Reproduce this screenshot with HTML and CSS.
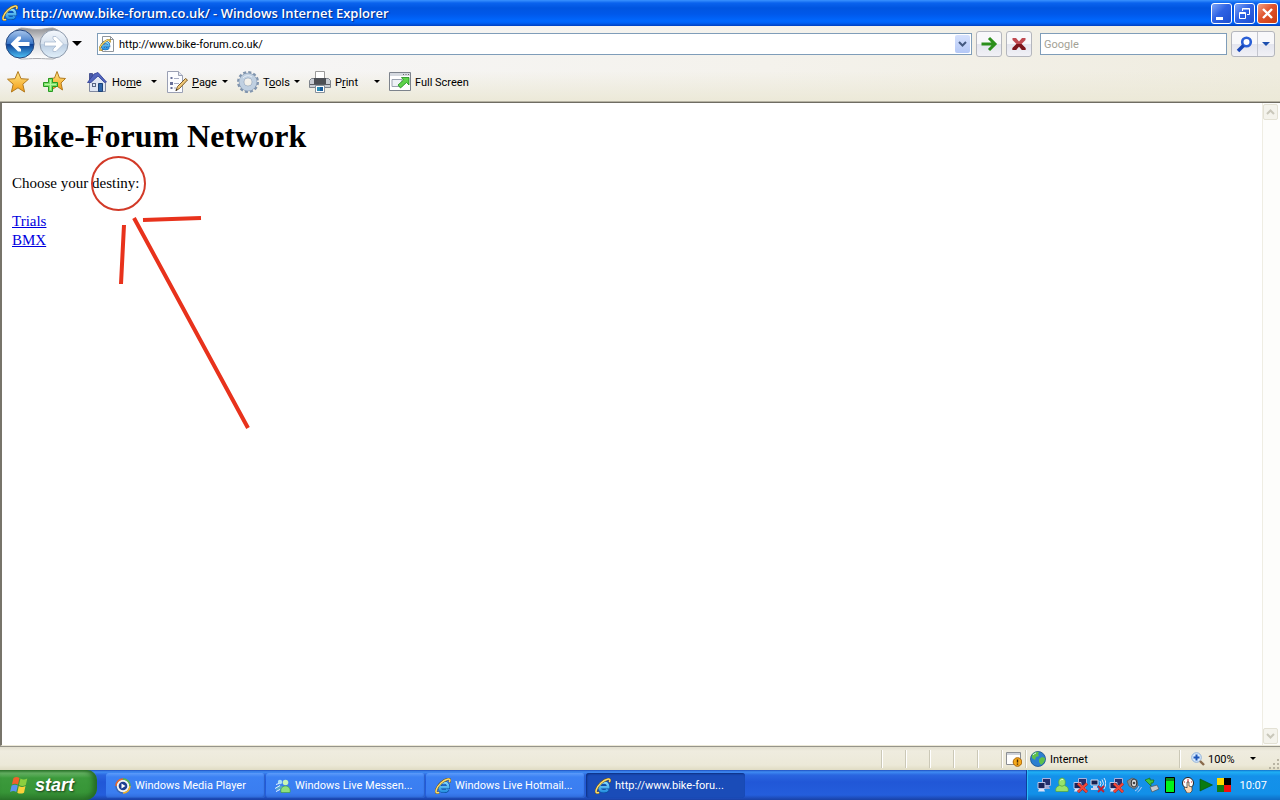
FILE: index.html
```html
<!DOCTYPE html>
<html lang="en">
<head>
  <meta charset="UTF-8">
  <title>http://www.bike-forum.co.uk/ - Windows Internet Explorer</title>
  <link rel="stylesheet" href="styles.css">
</head>
<body>
  <!-- shared icons -->
  <svg class="defs" width="0" height="0" aria-hidden="true">
    <defs>
      <linearGradient id="blueE" gradientUnits="userSpaceOnUse" x1="0" y1="3" x2="0" y2="15">
        <stop offset="0" stop-color="#8fe4ff"/><stop offset="1" stop-color="#1a86dd"/>
      </linearGradient>
      <linearGradient id="gold" x1="0" y1="0" x2="0" y2="1">
        <stop offset="0" stop-color="#ffe98a"/><stop offset="1" stop-color="#f39a12"/>
      </linearGradient>
      <linearGradient id="backBlue" x1="0" y1="0" x2="0" y2="1">
        <stop offset="0" stop-color="#a9c6ec"/><stop offset=".48" stop-color="#3c78c8"/><stop offset=".52" stop-color="#0c3f96"/><stop offset="1" stop-color="#4fc3f7"/>
      </linearGradient>
      <linearGradient id="fwdBlue" x1="0" y1="0" x2="0" y2="1">
        <stop offset="0" stop-color="#f4f8fd"/><stop offset=".5" stop-color="#d6e1ee"/><stop offset=".52" stop-color="#bccee3"/><stop offset="1" stop-color="#e2f0fa"/>
      </linearGradient>
      <linearGradient id="shell" x1="0" y1="0" x2="0" y2="1">
        <stop offset="0" stop-color="#8f8f92"/><stop offset=".35" stop-color="#cfd0d4"/><stop offset="1" stop-color="#ffffff"/>
      </linearGradient>
      <symbol id="ie" viewBox="0 0 16 16">
        <path d="M4.500 9.200h8.700c0-3-1.700-4.700-4.300-4.700-2.700 0-4.500 1.800-4.500 4.500 0 2.600 1.800 4.300 4.500 4.300 1.800 0 3.100-.7 3.800-2" fill="none" stroke="#0a4c9c" stroke-width="3.600"/>
        <path d="M4.500 9.200h8.700c0-3-1.700-4.700-4.300-4.700-2.700 0-4.500 1.800-4.500 4.500 0 2.600 1.800 4.300 4.500 4.300 1.800 0 3.100-.7 3.800-2" fill="none" stroke="url(#blueE)" stroke-width="2.500"/>
        <path d="M14.300 4.200C15.700 1.800 14.800 .8 12.500 1.200 8.500 2 3 7 1.400 11.400c-1 2.800 0 4.200 2.700 3" fill="none" stroke="#735510" stroke-width="2.500"/>
        <path d="M14.300 4.200C15.700 1.800 14.800 .8 12.500 1.200 8.500 2 3 7 1.400 11.400c-1 2.800 0 4.200 2.700 3" fill="none" stroke="#fbdc72" stroke-width="1.500"/>
      </symbol>
      <symbol id="pcs" viewBox="0 0 16 16">
        <path d="M6.500 1.500h8v7h-8z" fill="#24306e" stroke="#aab2dc"/>
        <path d="M8 9h5l1 3H8z" fill="#9ea7d2"/>
        <path d="M2 5.500h7v6H2z" fill="#1a2358" stroke="#bcc4e6"/>
        <path d="M3 12h5l1 2.500H2z" fill="#dde2f7"/>
      </symbol>
      <symbol id="redx" viewBox="0 0 16 16">
        <path d="M6 6.500l9 8.500M15 6.500L6 15" stroke="#a51c1c" stroke-width="3"/>
        <path d="M6 6.500l9 8.500M15 6.500L6 15" stroke="#f24a3c" stroke-width="1.800"/>
      </symbol>
    </defs>
  </svg>

  <header class="titlebar">
    <svg class="icon-16" aria-hidden="true"><use href="#ie"/></svg>
    <span class="title">http://www.bike-forum.co.uk/ - Windows Internet Explorer</span>
    <button class="win-btn" aria-label="Minimize">
      <svg width="19" height="19"><path d="M4 13h7v3H4z" fill="#fff"/></svg>
    </button>
    <button class="win-btn" aria-label="Restore">
      <svg width="19" height="19" fill="none" stroke="#fff"><path d="M7.500 7V4.500h7v6H12M7 5h8"/><path d="M4.500 8.500h6v6h-6zM4 9.500h7"/></svg>
    </button>
    <button class="win-btn close" aria-label="Close">
      <svg width="19" height="19"><path d="M5 5l9 9M14 5l-9 9" stroke="#fff" stroke-width="2.400"/></svg>
    </button>
  </header>

  <div class="toolbars">
    <div class="navbar">
      <div class="travel">
        <svg class="travel-shell" width="66" height="34" aria-hidden="true">
          <path d="M17 1C23 1 26 2.500 33 2.500S43 1 49 1a16 16 0 0 1 0 31C43 32 40 31.500 33 31.500S23 32 17 32A16 16 0 0 1 17 1z" fill="url(#shell)" stroke="#a9aaae"/>
        </svg>
        <button class="travel-btn" aria-label="Back">
          <svg width="30" height="30"><circle cx="15" cy="15" r="14" fill="url(#backBlue)" stroke="#25467e"/><path d="M5.500 15l7.500-7.500h3V10l-3 3h11.500v4H13l3 3v2.500h-3z" fill="#fff"/></svg>
        </button>
        <button class="travel-btn" aria-label="Forward">
          <svg width="30" height="30"><circle cx="15" cy="15" r="14" fill="url(#fwdBlue)" stroke="#8e9aab"/><path d="M24.500 15L17 7.500h-3V10l3 3H5.500v4H17l-3 3v2.500h3z" fill="#fff" stroke="#a3b4cc" stroke-width=".7"/></svg>
        </button>
      </div>
      <button class="plain recent" aria-label="Recent pages">
        <svg width="10" height="6"><path d="M0 0h10L5 5z"/></svg>
      </button>
      <div class="address">
        <svg class="icon-16" viewBox="0 0 16 16" aria-hidden="true">
          <path d="M3.500.500h8l3 3v12h-11z" fill="#fff" stroke="#8f959c"/><path d="M11.500.500v3h3" fill="none" stroke="#8f959c"/>
          <use href="#ie" x="0" y="3" width="12" height="12"/>
        </svg>
        <input class="field" type="text" value="http://www.bike-forum.co.uk/" aria-label="Address">
        <button class="combo" aria-label="Show address list">
          <svg width="9" height="6"><path d="M1 1l3.500 3.500L8 1" fill="none" stroke="#43597f" stroke-width="2"/></svg>
        </button>
      </div>
      <button class="tool" aria-label="Go">
        <svg width="18" height="16"><path d="M1.500 8h13M9 2l6 6-6 6" fill="none" stroke="#2c8f1c" stroke-width="3"/></svg>
      </button>
      <button class="tool" aria-label="Stop">
        <svg width="16" height="16"><path d="M1.500 2h3.500l3 3.500L11 2h3.500v2l-4 4 4 4v2H11l-3-3.500L5 14H1.500v-2l4-4-4-4z" fill="#c04a50"/><path d="M5.500 8h5l4 4v2H11l-3-3.500L5 14H1.500v-2z" fill="#7b161c"/></svg>
      </button>
      <div class="search">
        <input class="field" type="text" placeholder="Google" aria-label="Search">
      </div>
      <div class="search-split">
        <button class="split-main" aria-label="Search">
          <svg width="17" height="17"><circle cx="10.500" cy="6" r="4.300" fill="#fff" stroke="#2a5fd6" stroke-width="2.600"/><path d="M7.500 9.500L2 15" stroke="#1746b8" stroke-width="3.600"/></svg>
        </button>
        <button class="split-drop" aria-label="Search options">
          <svg width="8" height="5"><path d="M0 0h8L4 4z" fill="#1c4fae"/></svg>
        </button>
      </div>
    </div>

    <div class="commandbar">
      <button class="plain fav" aria-label="Favorites Center">
        <svg width="24" height="24"><path d="M12 1.500l3 7.200 7.500.5-5.700 5 1.800 7.800-6.600-4.200L5.400 22l1.800-7.800-5.700-5 7.500-.5z" fill="url(#gold)" stroke="#b27a1e" stroke-linejoin="round"/></svg>
      </button>
      <button class="plain fav" aria-label="Add to Favorites">
        <svg width="24" height="24"><path d="M15 1.500l2.500 6.500 6 .5-4.500 4.500 1.500 7-5.500-3.800L9.500 20 11 13 6.500 8.500l6-.5z" fill="url(#gold)" stroke="#b27a1e" stroke-linejoin="round"/><path d="M6.500 8.500h4v4h5v4h-5v5h-4v-5h-5v-4h5z" fill="#7ee06a" stroke="#279a22"/><path d="M8.500 10v10M3 14.500h11" stroke="#b6f5a2"/></svg>
      </button>
      <div class="commands">
        <button class="command wide">
          <svg width="22" height="22"><path d="M3.500 2.500h3v7h-3z" fill="#4858a8" stroke="#273478" stroke-width=".7"/><path d="M3.500 11.500L12 4l7.500 7.500v9h-16z" fill="#dfe6f3" stroke="#8089a0"/><path d="M1.500 11.500L8 3l4-1.500 8.500 9.500-2 .5L12 5 5 11.500z" fill="#5265bd" stroke="#2d3e94" stroke-width=".8"/><path d="M6 12h4v4H6z" fill="#5a6785"/><path d="M7 13h2v2H7z" fill="#dde8f7"/><path d="M12.500 12.500h4v8h-4z" fill="#2f67ac" stroke="#1d4377"/></svg>
          <span>Ho<u>m</u>e</span>
          <svg class="drop" width="6" height="4"><path d="M0 0h6L3 3z"/></svg>
        </button>
        <button class="command">
          <svg width="22" height="22"><path d="M1.500.500h11l4 4v17h-15z" fill="#fbfcff" stroke="#9aa0b4"/><path d="M12.500.500v4h4" fill="#dfe4f0" stroke="#9aa0b4"/><path d="M4.500 6h2v2h-2zM4 11h3v3H4zM4.500 16h2v2h-2z" fill="#69709a"/><path d="M8 7.500h5M8 12.500h5M8 17h2" stroke="#a7adc3"/><path d="M10 19.500l1.500-4 8-8 2 1.500-8 8.500z" fill="#f0c877" stroke="#7b5b2a"/><path d="M9.500 20l.7-2 1.300 1z" fill="#222"/></svg>
          <span><u>P</u>age</span>
          <svg class="drop" width="6" height="4"><path d="M0 0h6L3 3z"/></svg>
        </button>
        <button class="command">
          <svg width="22" height="22"><circle cx="11" cy="11" r="9.500" fill="none" stroke="#8195ae" stroke-width="3" stroke-dasharray="2.970 2"/><circle cx="11" cy="11" r="6.500" fill="none" stroke="#8094ad" stroke-width="5.500"/><circle cx="11" cy="11" r="6.500" fill="none" stroke="#c0d0e1" stroke-width="4.400"/><path d="M6 7a6.500 6.500 0 0 1 9-1" fill="none" stroke="#e6eef6"/></svg>
          <span>T<u>o</u>ols</span>
          <svg class="drop" width="6" height="4"><path d="M0 0h6L3 3z"/></svg>
        </button>
        <button class="command wide">
          <svg width="22" height="22"><path d="M6.500.500h9v8h-9z" fill="#fff" stroke="#9b9b9b"/><path d="M.500 9.500l2-2h17l2 2v7H.500z" fill="#c8ccd3" stroke="#7f848c"/><path d="M5 7h12v6H5z" fill="#4c4f55"/><path d="M1 13.500h20" stroke="#5b5e64"/><path d="M6.500 14.500h9v7h-9z" fill="#fff" stroke="#87909a"/><path d="M8 16h3v4H8z" fill="#2a8db5"/><path d="M11 16h3v4h-3z" fill="#175c9c"/></svg>
          <span>P<u>r</u>int</span>
          <svg class="drop" width="6" height="4"><path d="M0 0h6L3 3z"/></svg>
        </button>
        <button class="command">
          <svg width="22" height="20"><path d="M.500.500h21v18H.500z" fill="#fff" stroke="#7d838c"/><path d="M1 1h20v3H1z" fill="#d5d9df"/><path d="M14 2.500h1M16.500 2.500h1M19 2.500h1" stroke="#666"/><path d="M3 7.500h10v7H3z" fill="#eef1f6" stroke="#9ba3b0"/><path d="M9 13l5.500-5-2-2.500H20V13l-2.500-2.500-6 5.500z" fill="#5ed34a" stroke="#1d8a1c" stroke-width=".8"/></svg>
          <span>Full Screen</span>
        </button>
      </div>
    </div>
  </div>

  <div class="viewport">
    <main class="page">
      <h1>Bike-Forum Network</h1>
      <p>Choose your destiny:</p>
      <p><a href="#">Trials</a><br><a href="#">BMX</a></p>
      <!-- hand-drawn marks over the page -->
      <svg class="marks" width="260" height="340" fill="none" stroke="#e8321c" aria-hidden="true">
        <circle cx="116.500" cy="80.500" r="26.500" stroke="#d23a28" stroke-width="2"/>
        <path d="M132 115L246 325M141 117l58-2M122 122l-3 59" stroke-width="4"/>
      </svg>
    </main>
    <div class="scrollbar">
      <button class="scroll-btn" aria-label="Scroll up"><svg width="9" height="6"><path d="M1 5l3.500-3.500L8 5" fill="none" stroke="#c9c7ba" stroke-width="2"/></svg></button>
      <button class="scroll-btn" aria-label="Scroll down"><svg width="9" height="6"><path d="M1 1l3.500 3.500L8 1" fill="none" stroke="#c9c7ba" stroke-width="2"/></svg></button>
    </div>
  </div>

  <div class="statusbar">
    <span class="pane"></span>
    <span class="pane"></span>
    <span class="pane"></span>
    <span class="pane"></span>
    <span class="pane"></span>
    <span class="pane">
      <svg width="16" height="16"><path d="M.500 1.500h14v12H.500z" fill="#fff" stroke="#8b8e93"/><path d="M1 2h13v2H1z" fill="#cfd3da"/><circle cx="11.500" cy="11" r="4.300" fill="#f5a91b" stroke="#a96506"/><path d="M11.500 8.500v3M11.500 12.500v1.200" stroke="#4b2a00" stroke-width="1.400"/></svg>
    </span>
    <span class="pane zone">
      <svg width="16" height="16"><circle cx="8" cy="8" r="7.500" fill="#2c7fd0" stroke="#184f8c" stroke-width=".8"/><path d="M2 4c2-3 5-3.500 7-3l-1 2 1 2-3 1-1 3-3-2zM9 8l3-2 3 1c0 3-1 5-4 7l-2-3z" fill="#5fc04a"/><path d="M3 4c1-1 2-1.800 3-2" stroke="#d6f3ff" fill="none"/></svg>
      <span>Internet</span>
    </span>
    <button class="pane zoom">
      <svg width="14" height="14"><circle cx="5.500" cy="5.500" r="4.800" fill="#d8eafd" stroke="#8fb0d8"/><path d="M5.500 2.500v6M2.500 5.500h6" stroke="#1c55b8" stroke-width="2"/><path d="M9 9l4 4" stroke="#8a6a4c" stroke-width="2.400"/></svg>
      <span>100%</span>
      <svg class="drop" width="6" height="4"><path d="M0 0h6L3 3z"/></svg>
    </button>
    <svg class="grip" width="12" height="12" fill="#b8b4a3"><path d="M9 1h2v2H9zM5 5h2v2H5zM9 5h2v2H9zM1 9h2v2H1zM5 9h2v2H5zM9 9h2v2H9z"/></svg>
  </div>

  <footer class="taskbar">
    <button class="start">
      <svg width="20" height="18" aria-hidden="true"><path d="M3.500 2c2-1.300 4-1.300 6 0L8 8.600C6 7.300 4 7.300 1.900 8.600z" fill="#f0602c"/><path d="M10.500 2.600c2 1.300 4.200 1.200 6.800 0l-1.500 6.500c-2.400 1.200-4.600 1.200-6.800 0z" fill="#8ccf3f"/><path d="M1.600 9.600c2.200-1.300 4.200-1.300 6.200 0L6.300 16c-2-1.300-4-1.300-6.200 0z" fill="#5b93f0"/><path d="M8.800 10.100c2 1.300 4.300 1.300 6.700 0L14 16.700c-2.400 1.200-4.600 1.200-6.700 0z" fill="#fbd13a"/></svg>
      <span>start</span>
    </button>
    <div class="tasks">
      <button class="task">
        <svg class="icon-16"><circle cx="8" cy="8" r="7" fill="#f3f3f3" stroke="#3869b8" stroke-width="1.500"/><path d="M8 1a7 7 0 0 1 7 7" fill="none" stroke="#5db947" stroke-width="1.600"/><path d="M1 8a7 7 0 0 1 7-7" fill="none" stroke="#ef6a28" stroke-width="1.600"/><path d="M15 8a7 7 0 0 1-7 7" fill="none" stroke="#f1b42d" stroke-width="1.600"/><circle cx="8" cy="8" r="4.300" fill="#1c3e91"/><path d="M6.500 5.500l4 2.500-4 2.500z" fill="#fff"/></svg>
        <span>Windows Media Player</span>
      </button>
      <button class="task">
        <svg class="icon-16"><circle cx="5" cy="4" r="2.200" fill="#aee0f5"/><path d="M1 12c0-6 8-6 8 0z" fill="#57a6cc"/><path d="M0 10.500l5-3M1 13.500l4-2M1 6.500l3-1" stroke="#e8f7ff"/><circle cx="10.500" cy="4.500" r="2.800" fill="#c8f5b4"/><path d="M6 14.500C5 10 8 8 10.500 8s5.500 2 4.500 6.500z" fill="#8fe07c" stroke="#3b9a3b" stroke-width=".6"/></svg>
        <span>Windows Live Messen...</span>
      </button>
      <button class="task">
        <svg class="icon-16"><use href="#ie"/></svg>
        <span>Windows Live Hotmail...</span>
      </button>
      <button class="task active">
        <svg class="icon-16"><use href="#ie"/></svg>
        <span>http://www.bike-foru...</span>
      </button>
    </div>
    <div class="tray">
      <svg class="icon-16"><use href="#pcs"/></svg>
      <svg class="icon-16"><path d="M2 14.500c-1-3.500 1-5 3.500-6C4 6 4.500 1 8 1s4 5 2.500 7.500c2.500 1 4.500 2.500 3.500 6z" fill="#97e36a" stroke="#56a53a" stroke-width=".7"/><path d="M6 8.500q2 1.500 4 0" fill="none" stroke="#56a53a" stroke-width=".8"/><path d="M6.500 3.500q1-1.500 2.500-1" fill="none" stroke="#e6ffd5"/></svg>
      <svg class="icon-16"><use href="#pcs"/><use href="#redx"/></svg>
      <svg class="icon-16"><path d="M1 3h7v5H1z" fill="#16204f" stroke="#d5dbf2"/><path d="M3 9h4v2h1v2H1v-2h2z" fill="#c8cfec"/><path d="M10 4q2 2 0 5M12 2.500q3 4 0 8M14 1q3.500 5 0 11" fill="none" stroke="#dfe9fb"/><path d="M8 9l6 6M14 9l-6 6" stroke="#c3202e" stroke-width="1.800"/></svg>
      <svg class="icon-16"><use href="#pcs"/><use href="#redx"/></svg>
      <svg class="icon-16"><path d="M1 4l5-3 5 2 1 6-4 3-5-3z" fill="#8b8d90" stroke="#55585c" stroke-width=".7"/><ellipse cx="8" cy="6" rx="2.800" ry="4" fill="#d9dadb" stroke="#333"/><circle cx="8" cy="6" r="1.300" fill="#444"/><path d="M9 14q3-1 4-5M11.500 15q3-2 4-5" fill="none" stroke="#b6cdf7"/></svg>
      <svg class="icon-16"><path d="M6 10l7-2 2 4-7 3z" fill="#c5c9ce" stroke="#4b4f55" stroke-width=".7"/><path d="M1 3l5-2v2h4l-1 3H7v3z" fill="#42c63c" stroke="#146b18" stroke-width=".7"/></svg>
      <svg class="icon-16"><path d="M3.500.500h9v15h-9z" fill="#00f51a" stroke="#000"/><path d="M4 1h8v3H4z" fill="#0a8a18"/></svg>
      <svg class="icon-16"><circle cx="8" cy="6" r="5.500" fill="#fff" stroke="#222"/><path d="M8 6V2M4 5h1M11 5h1" stroke="#d02020"/><path d="M7 5h2v4l3 1v4l-2 2H7l-3-5 2-1 1 1z" fill="#ffd7b0" stroke="#333" stroke-width=".7"/></svg>
      <svg class="icon-16"><path d="M2 2l12.500 6L2 14z" fill="#0a7a10" stroke="#064d0a" stroke-width=".6"/></svg>
      <svg class="icon-16"><path d="M1 1h7v7H1z" fill="#ffd900"/><path d="M8 1h7v7H8z" fill="#000"/><path d="M1 8h7v7H1z" fill="#117d12"/><path d="M8 8h7v7H8z" fill="#f30d0d"/></svg>
      <time class="clock">10:07</time>
    </div>
  </footer>
</body>
</html>
```

FILE: styles.css
```css
* {
  box-sizing: border-box;
}
body {
  margin: 0;
  height: 100vh;
  display: flex;
  flex-direction: column;
  overflow: hidden;
  font-family: Roboto, "Noto Sans", sans-serif;
  font-size: 11px;
  color: #000;
}
button {
  margin: 0;
  padding: 0;
  border: 0;
  background: none;
  font: inherit;
  color: inherit;
  display: flex;
  align-items: center;
}
svg {
  flex: none;
  display: block;
}
.defs {
  position: absolute;
}
.icon-16 {
  width: 16px;
  height: 16px;
}

/* title bar */
.titlebar {
  height: 26px;
  flex: none;
  display: flex;
  align-items: center;
  gap: 2px;
  padding: 0 2px;
  background: linear-gradient(#3a93ff 0, #0a63ee 3px, #0055e0 8px, #0058ea 14px, #0068ff 21px, #0061f5 23px, #0040c0 26px);
}
.title {
  flex: 1;
  padding-left: 2px;
  font-family: "Open Sans", sans-serif;
  font-size: 13px;
  font-weight: 600;
  color: #fff;
  text-shadow: 1px 1px 1px #0a2a80;
  white-space: nowrap;
}
.win-btn {
  width: 21px;
  height: 21px;
  border: 1px solid #fff;
  border-radius: 3px;
  background: linear-gradient(135deg, #7ea5f7, #2f63e4 45%, #1d4fd0);
}
.win-btn.close {
  background: linear-gradient(135deg, #f0a084, #e0532c 45%, #c93c12);
}

/* toolbars */
.toolbars {
  flex: none;
  background: linear-gradient(rgba(236, 233, 216, 0) 60%, #ece9d8), linear-gradient(90deg, #f7f7fa, #f4f2ec 60%, #efecdf);
  border-bottom: 1px solid #b5b2a3;
}
.navbar {
  height: 36px;
  display: flex;
  align-items: center;
  padding: 0 5px 0 4px;
}
.travel {
  position: relative;
  width: 66px;
  height: 34px;
  display: flex;
  align-items: center;
  justify-content: space-between;
  padding: 0 1px;
}
.travel-shell {
  position: absolute;
  left: 0;
  top: 0;
}
.travel-btn {
  position: relative;
}
.recent {
  padding: 0 15px 0 2px;
}
.address,
.search {
  height: 22px;
  display: flex;
  align-items: center;
  border: 1px solid #7f9db9;
  background: #fff;
}
.address {
  flex: 1;
  padding: 0 1px;
  margin-right: 4px;
}
.field {
  flex: 1;
  min-width: 0;
  border: 0;
  padding: 1px 4px 0;
  outline: 0;
  background: none;
  font: inherit;
  color: #000;
}
.field::placeholder {
  color: #a3a195;
  opacity: 1;
}
.combo {
  width: 15px;
  height: 18px;
  justify-content: center;
  border-radius: 2px;
  background: linear-gradient(#d5e1fd, #b4c8f6);
}
.tool {
  width: 26px;
  height: 26px;
  margin-right: 4px;
  justify-content: center;
}
.tool,
.search-split {
  border: 1px solid #b4b6bd;
  border-radius: 3px;
  background: linear-gradient(#f8f8fa 50%, #e4e5ee 52%, #f1f1f6);
}
.search {
  width: 187px;
  margin: 0 4px;
}
.search .field {
  padding: 1px 3px 0;
}
.search-split {
  height: 26px;
  display: flex;
}
.split-main {
  width: 25px;
  justify-content: center;
}
.split-drop {
  width: 17px;
  justify-content: center;
  border-left: 1px solid #c4c6ce;
}
.commandbar {
  height: 39px;
  display: flex;
  align-items: center;
  padding: 0 6px 0 6px;
}
.fav {
  margin-right: 12px;
}
.commands {
  display: flex;
  gap: 9px;
  margin-left: 8px;
}
.command {
  min-width: 62px;
  gap: 4px;
  white-space: nowrap;
}
.command span {
  padding-top: 1px;
}
.command.wide {
  min-width: 71px;
}
.command .drop {
  margin-left: auto;
}

/* page area */
.viewport {
  flex: 1;
  min-height: 0;
  display: flex;
  background: #fff;
  border-left: 2px solid #77746a;
  border-top: 1px solid #6f6c62;
  border-bottom: 1px solid #ece9d8;
}
.page {
  position: relative;
  flex: 1;
  padding: 15px 10px;
  font-family: "Liberation Serif", "Times New Roman", serif;
  font-size: 15px;
  line-height: 19px;
}
.page h1 {
  margin: 0 0 19px;
  font-size: 32px;
  line-height: 37px;
}
.page p {
  margin: 0 0 19px;
}
.page a {
  color: #0000e0;
}
.marks {
  position: absolute;
  left: 0;
  top: 0;
}
.scrollbar {
  width: 18px;
  display: flex;
  flex-direction: column;
  justify-content: space-between;
  padding: 1px 2px 1px 0;
  border-left: 1px solid #efede3;
  background: #fdfdfb;
}
.scroll-btn {
  height: 16px;
  justify-content: center;
  border: 1px solid #e3e1d4;
  border-radius: 2px;
  background: #f4f3ec;
}

/* status bar */
.statusbar {
  height: 24px;
  flex: none;
  display: flex;
  align-items: center;
  justify-content: flex-end;
  border-top: 1px solid #96948a;
  background: linear-gradient(#e2dfcf, #efecdf 4px, #ece9d8 18px, #e0dcc4);
}
.pane {
  width: 24px;
  height: 18px;
  flex: none;
  display: flex;
  align-items: center;
  padding: 1px 0 0 4px;
  border-left: 1px solid #cbc8b7;
  box-shadow: inset 1px 0 #fff;
}
.zone {
  width: 154px;
  gap: 4px;
}
.zoom {
  width: 89px;
  gap: 3px;
  padding: 1px 12px 0 11px;
}
.zoom .drop {
  margin-left: auto;
}
.grip {
  align-self: flex-end;
}

/* task bar */
.taskbar {
  height: 30px;
  flex: none;
  display: flex;
  color: #fff;
  background: linear-gradient(#1f4fc0 0, #3f8cf3 2px, #2a66e0 5px, #2157d7 12px, #245edc 25px, #1941a5 30px);
}
.start {
  width: 97px;
  gap: 5px;
  padding-left: 10px;
  border-radius: 0 10px 12px 0;
  background: linear-gradient(#2f7a2f 0, #67b365 3px, #3c9a3c 8px, #379537 22px, #2c7a2c 30px);
  box-shadow: inset -4px 0 5px #256b25;
  font-family: "Liberation Sans", Arial, sans-serif;
  font-size: 18px;
  font-weight: bold;
  font-style: italic;
  text-shadow: 1px 1px 2px #1b3f1b;
}
.tasks {
  flex: 1;
  display: flex;
  align-items: center;
  gap: 1px;
  padding: 1px 0 0 9px;
}
.task {
  width: 159px;
  height: 25px;
  gap: 4px;
  padding: 0 9px;
  border-radius: 3px;
  background: linear-gradient(#5c9bfa, #3c81f3 4px, #3a7df0 20px, #2f6bdc);
  box-shadow: inset -1px -1px 1px #2a5fc8;
  white-space: nowrap;
}
.task.active {
  background: #1a4cb8;
  box-shadow: inset 1px 1px 2px #0d2f80;
}
.tray {
  display: flex;
  align-items: center;
  gap: 2px;
  padding: 0 13px 0 9px;
  border-left: 1px solid #0c3f9c;
  background: linear-gradient(#1172cc 0, #1fb0f5 2px, #1491ea 6px, #1290e8 24px, #0f6cc4 30px);
  box-shadow: inset 1px 0 #2bbcf8;
}
.clock {
  padding-left: 6px;
}
```
